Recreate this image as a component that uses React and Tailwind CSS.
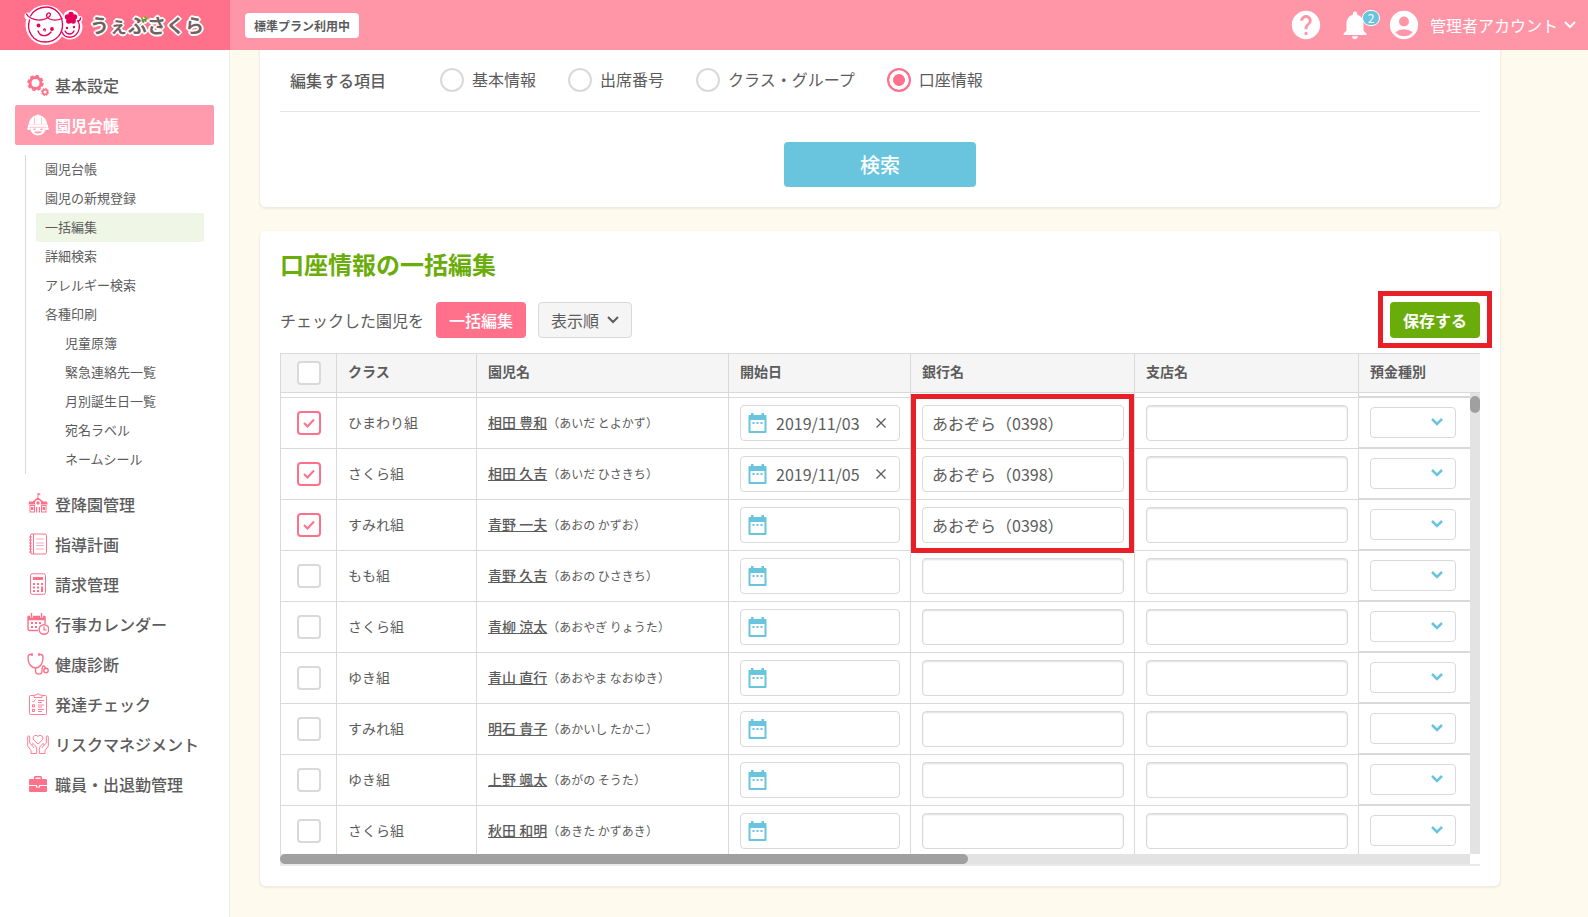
import { MdAccountCircle, MdHelp, MdNotifications } from "react-icons/md";

const FONT = "font-['Noto_Sans_CJK_JP','Noto_Sans',sans-serif]";

const SettingsIcon = () => (
  <svg viewBox="0 0 22 22" className="h-[22px] w-[22px]" fill="none" stroke="#ff708b">
    <circle cx="8.5" cy="9" r="5.500" strokeWidth="3" />
    <circle cx="8.5" cy="9" r="7.400" strokeWidth="1.600" strokeDasharray="3.400 2.410" />
    <circle cx="18" cy="18" r="2.4" strokeWidth="1.6" />
    <circle cx="18" cy="18" r="3.6" strokeWidth="1" strokeDasharray="1.6 1.2" />
  </svg>
);

const ChildIcon = () => (
  <svg viewBox="0 0 22 22" className="h-[22px] w-[22px]" fill="white">
    <path d="M2 10.5C2 5 6 1.6 10 1.2V.4h2v.8c4 .4 8 3.800 8 9.300z" />
    <path d="M1 10.500h20v2.500H1z" />
    <path
      fillRule="evenodd"
      d="M3 12.500h16c0 5.500-3.500 9-8 9s-8-3.500-8-9zm3.500 2v1.500h2v-1.500zm7 0v1.500h2v-1.500zM7 17.500c1 2.500 7 2.500 8 0z"
    />
    <circle cx="1.800" cy="14.500" r="1.600" />
    <circle cx="20.200" cy="14.500" r="1.600" />
    <path d="M7.500 3.500v6.500M14.500 3.500v6.500M3 13.300h16" stroke="#ff9bad" strokeWidth=".6" />
  </svg>
);

const SchoolIcon = () => (
  <svg viewBox="0 0 22 22" className="h-[22px] w-[22px]" fill="#ff708b">
    <path d="M10.500 0h.8l2.700 1.300-2.700 1.200V4.500l5 4H20l.6 3H1.500l.6-3h3.600l4.800-4z" />
    <circle cx="11" cy="10" r="3" fill="white" />
    <circle cx="11" cy="10" r="1.700" />
    <path
      fillRule="evenodd"
      d="M2.500 12h5.500v7.500H2.500zm1 1v5.500H7V13zm10.500-1h5.500v7.500H14zm1 1v5.500h3.500V13z"
    />
    <path d="M4 14h2.500v3H4zM15.500 14H18v3h-2.500zM9 14h1.200v5.500H9zM11.800 14H13v5.500h-1.200z" />
  </svg>
);

const NotebookIcon = () => (
  <svg viewBox="0 0 22 22" className="h-[22px] w-[22px]" fill="none" stroke="#ff708b">
    <rect x="3.500" y="1" width="16" height="20" rx="1.500" />
    <path d="M6.500 1v20" />
    <path d="M2 4h3M2 7h3M2 10h3M2 13h3M2 16h3M2 19h3" strokeWidth="1.200" />
    <path d="M9 6h8M9 10h8M9 12.500h8M9 16h8" strokeWidth=".6" />
  </svg>
);

const CalculatorIcon = () => (
  <svg viewBox="0 0 22 22" className="h-[22px] w-[22px]" fill="none" stroke="#ff708b">
    <rect x="3.500" y=".800" width="15" height="20.500" rx="2" />
    <path d="M6 5.500h10" strokeWidth="3" />
    <path d="M6 11h2M10 11h2M6 14.500h2M10 14.500h2M6 18h2M10 18h2M14 11h2" strokeWidth="1.800" />
    <path d="M15 13.500V19" strokeWidth="2" />
  </svg>
);

const EventIcon = () => (
  <svg viewBox="0 0 22 22" className="h-[22px] w-[22px]" fill="none" stroke="#ff708b">
    <path d="M11 17.500H2.500a1.500 1.500 0 0 1-1.500-1.500V4h17v7" strokeWidth="1.400" />
    <path d="M1 5h17" strokeWidth="4.500" />
    <path d="M4.500 0v4.500M14.500 0v4.500" stroke="white" strokeWidth="3" />
    <path d="M4.500 0v4.500M14.500 0v4.500" strokeWidth="1.400" />
    <path d="M4 10h2M8 10h2M12 10h2M4 14h2M8 14h2" strokeWidth="2.200" />
    <circle cx="17" cy="16.500" r="4.800" fill="white" strokeWidth="1.400" />
    <path d="M17 13.500v3.300h2.500" strokeWidth="1.200" />
  </svg>
);

const StethoscopeIcon = () => (
  <svg viewBox="0 0 22 22" className="h-[22px] w-[22px]" fill="none" stroke="#ff708b" strokeWidth="1.400">
    <path d="M5.500 1.500H3C1.500 1.500 1 3 1 5c0 6 3.500 10 7.500 10S16 11 16 5c0-2-.5-3.500-2-3.500h-2.500" />
    <path d="M5 .300v2.500M12 .300v2.500" strokeWidth="1.800" />
    <path d="M8.500 15v2.500c0 5 6.500 4.500 6.500.5 0-2.500 0-5 1.500-5s1.500 1 2 2.500" />
    <circle cx="19" cy="17.500" r="2.200" />
  </svg>
);

const ChecklistIcon = () => (
  <svg viewBox="0 0 22 22" className="h-[22px] w-[22px]" fill="none" stroke="#ff708b" strokeWidth=".900">
    <rect x="2.500" y="2.500" width="17" height="19" rx="1" />
    <path d="M7 4.500V2h2.500c.5-1.800 2.500-1.800 3 0H15v2.500z" fill="white" />
    <path d="M5.500 8l1 1 2-2.500M11 7.500h6M11 9.500h4" />
    <rect x="5.500" y="11.800" width="2" height="2" />
    <rect x="5.500" y="16.500" width="2" height="2" />
    <path d="M11 12h6M11 14h4M11 16.500h6M11 18.500h4" />
  </svg>
);

const CareIcon = () => (
  <svg viewBox="0 0 22 22" className="h-[22px] w-[22px]" fill="none" stroke="#ff708b" strokeWidth=".900">
    <path d="M11 11L6.800 7C4.500 4 8.500.500 11 3.500 13.500.500 17.500 4 15.200 7z" />
    <path d="M4 20.500v-3L.700 13V4c0-1.500 2-1.500 2 0v6l2 2 1-1.500c2.500 1.500 4 4 4 6v4z" />
    <path d="M18 20.500v-3l3.300-4.500V4c0-1.500-2-1.500-2 0v6l-2 2-1-1.500c-2.500 1.500-4 4-4 6v4z" />
    <path d="M4.700 12l2.500 3M17.300 12l-2.500 3" />
  </svg>
);

const BriefcaseIcon = () => (
  <svg viewBox="0 0 22 22" className="h-[22px] w-[22px]" fill="#ff708b">
    <path fillRule="evenodd" d="M7 6V4.500C7 3.500 7.500 3 8.500 3h5c1 0 1.500.5 1.500 1.500V6h3.500c1 0 1.500.5 1.500 1.500V12H2V7.500C2 6.500 2.500 6 3.500 6zm1.500 0h5V4.500h-5z" />
    <path d="M2 13h7v1.500h4V13h7v4.500c0 1-.5 1.500-1.500 1.500h-15C2.500 19 2 18.500 2 17.500z" />
    <path d="M10 12h2v1.500h-2z" />
  </svg>
);

const CalendarIcon = () => (
  <svg viewBox="0 0 19 20" className="h-5 w-[19px] shrink-0" fill="none">
    <path d="M1.500 3h16v16h-16z" stroke="#69c4de" strokeWidth="2" strokeLinejoin="round" />
    <path d="M1 2h17v5H1zM3 0h2.500v3H3zM13.500 0H16v3h-2.500z" fill="#69c4de" />
    <path d="M4.500 10h2M8.500 10h2M12.500 10h2" stroke="#69c4de" strokeWidth="2" />
  </svg>
);

const Chevron = ({ className }) => (
  <svg viewBox="0 0 12 8" className={className} fill="none" stroke="currentColor" strokeWidth="2">
    <path d="M1 1l5 5 5-5" />
  </svg>
);

const Logo = () => (
  <a href="#" aria-label="うぇぶさくら" className="flex h-full w-[230px] shrink-0 items-center bg-[#ff708b] pl-6">
    <svg viewBox="24 0 60 50" className="h-[50px] w-[60px] shrink-0" fill="none">
      <g fill="white">
        <circle cx="45.500" cy="25" r="20" />
        <circle cx="70" cy="27" r="12.500" />
        <circle cx="71" cy="18" r="8" />
        <circle cx="28" cy="16" r="3.500" />
        <circle cx="79.500" cy="19" r="3" />
      </g>
      <g stroke="#e5005a" strokeWidth="1.300" strokeLinecap="round">
        <path d="M29.500 20C26 31 33 42 45 42s18-9 17.500-18C62 14 55 7 46 7c-7 0-13 4-15.500 9" />
        <path d="M26.500 14c3 5 12 8 20 4.500 6-3 4-7 1-5-4 4 5 9 14.500 5" />
        <path d="M62 32c3 7 12 7 16 0 2-4 2-7 0-11" />
        <path d="M77.500 21c2 0 3-1 3-3" />
        <path d="M38 31c2 6 9 6 13 1M65 31c2 4 7 4 9 0M43.500 30c1-2 2.500-1 1.500 1" />
      </g>
      <g fill="#e5005a">
        <circle cx="38.500" cy="25.500" r="1.900" />
        <circle cx="52" cy="29" r="1.900" />
        <circle cx="67" cy="28" r="1.200" />
        <circle cx="74" cy="27" r="1.200" />
        <circle cx="71" cy="14.500" r="2.700" />
        <circle cx="74.500" cy="17" r="2.700" />
        <circle cx="73.200" cy="21" r="2.700" />
        <circle cx="68.800" cy="21" r="2.700" />
        <circle cx="67.500" cy="17" r="2.700" />
        <circle cx="71" cy="18" r="3" />
      </g>
    </svg>
    <span className="relative ml-1.5 text-[19px] leading-7 font-bold text-[#6f625f] [text-shadow:2px_0_white,-2px_0_white,0_2px_white,0_-2px_white,1px_1px_white,-1px_1px_white,1px_-1px_white,-1px_-1px_white]">
      うぇぶさくら
      <svg viewBox="0 0 8 8" className="absolute top-1 left-[50px] h-2 w-2" stroke="#6aad0a" strokeWidth="2" strokeLinecap="round">
        <path d="M2 3.500l1.500 2M5 2l1.500 2" />
      </svg>
    </span>
  </a>
);

const subMenu = [
  { label: "園児台帳" },
  { label: "園児の新規登録" },
  { label: "一括編集", active: true },
  { label: "詳細検索" },
  { label: "アレルギー検索" },
  { label: "各種印刷" },
  { label: "児童原簿", nested: true },
  { label: "緊急連絡先一覧", nested: true },
  { label: "月別誕生日一覧", nested: true },
  { label: "宛名ラベル", nested: true },
  { label: "ネームシール", nested: true },
];

const menu = [
  { label: "基本設定", icon: SettingsIcon },
  { label: "園児台帳", icon: ChildIcon, active: true, children: subMenu },
  { label: "登降園管理", icon: SchoolIcon },
  { label: "指導計画", icon: NotebookIcon },
  { label: "請求管理", icon: CalculatorIcon },
  { label: "行事カレンダー", icon: EventIcon },
  { label: "健康診断", icon: StethoscopeIcon },
  { label: "発達チェック", icon: ChecklistIcon },
  { label: "リスクマネジメント", icon: CareIcon },
  { label: "職員・出退勤管理", icon: BriefcaseIcon },
];

const items = ["基本情報", "出席番号", "クラス・グループ", "口座情報"];

const rows = [
  { group: "ひまわり組", name: "相田 豊和", kana: "あいだ とよかず", date: "2019/11/03", bank: "あおぞら（0398）", checked: true },
  { group: "さくら組", name: "相田 久吉", kana: "あいだ ひさきち", date: "2019/11/05", bank: "あおぞら（0398）", checked: true },
  { group: "すみれ組", name: "青野 一夫", kana: "あおの かずお", bank: "あおぞら（0398）", checked: true },
  { group: "もも組", name: "青野 久吉", kana: "あおの ひさきち" },
  { group: "さくら組", name: "青柳 涼太", kana: "あおやぎ りょうた" },
  { group: "ゆき組", name: "青山 直行", kana: "あおやま なおゆき" },
  { group: "すみれ組", name: "明石 貴子", kana: "あかいし たかこ" },
  { group: "ゆき組", name: "上野 颯太", kana: "あがの そうた" },
  { group: "さくら組", name: "秋田 和明", kana: "あきた かずあき" },
];

const Header = () => (
  <header className="relative z-20 flex h-[50px] items-center bg-[#ff96a8] pr-3 text-white">
    <Logo />
    <span className="ml-[15px] rounded bg-white px-[9px] pt-px text-xs leading-6 font-bold text-[#5c5c5c]">標準プラン利用中</span>
    <div className="ml-auto flex items-center gap-[15px]">
      <button type="button" aria-label="ヘルプ">
        <MdHelp size={34} />
      </button>
      <button type="button" aria-label="お知らせ" className="relative">
        <MdNotifications size={34} />
        <span className="absolute top-0.5 -right-2 flex h-4 w-[18px] items-center justify-center rounded-full border border-white bg-[#69c4de] text-xs leading-3">
          2
        </span>
      </button>
      <button type="button" className="flex items-center">
        <MdAccountCircle size={34} />
        <span className="ml-[9px] text-base">管理者アカウント</span>
        <Chevron className="ml-1.5 h-2 w-3" />
      </button>
    </div>
  </header>
);

const Sidebar = () => (
  <nav className="w-[230px] shrink-0 border-r border-[#ececec] bg-white px-[15px] pt-[15px]">
    {menu.map(({ label, icon: Icon, active, children }) => (
      <div key={label}>
        <a
          href="#"
          className={`flex h-10 items-center gap-1.5 rounded-xs pl-3 ${active ? "bg-[#ff9bad] font-bold text-white" : "font-medium"}`}
        >
          <Icon />
          {label}
        </a>
        {children && (
          <ul className="m-2.5 border-l border-[#d9d9d9] pl-2.5">
            {children.map((c) => (
              <li key={c.label}>
                <a
                  href="#"
                  className={`block rounded-xs pb-0.5 text-[13px] leading-[27px] ${c.nested ? "pl-[29px]" : "pl-[9px]"} ${c.active ? "bg-[#f0f6e6]" : ""}`}
                >
                  {c.label}
                </a>
              </li>
            ))}
          </ul>
        )}
      </div>
    ))}
  </nav>
);

const Checkbox = ({ label, checked }) => (
  <span className="relative mx-auto block h-6 w-6">
    <input
      type="checkbox"
      aria-label={label}
      defaultChecked={checked}
      className="peer block h-6 w-6 appearance-none rounded border-2 border-[#d9d9d9] bg-white checked:border-[#ff708b]"
    />
    <svg
      viewBox="0 0 12 10"
      className="pointer-events-none absolute top-[7px] left-1.5 hidden h-2.5 w-3 peer-checked:block"
      fill="none"
      stroke="#ff708b"
      strokeWidth="2"
    >
      <path d="M1 5l3.500 3.500L11 1.500" />
    </svg>
  </span>
);

const SearchCard = () => (
  <section className="rounded-b-md bg-white px-5 pb-5 shadow-[0_1px_2px_1px_#efebe0]">
    <fieldset className="flex h-[62px] items-center border-b border-[#e5e5e5] px-2.5 pb-0.5">
      <legend className="float-left w-[150px] font-medium">編集する項目</legend>
      <div className="flex gap-8">
        {items.map((item) => (
          <label key={item} className="flex items-center gap-2">
            <input
              type="radio"
              name="item"
              defaultChecked={item === "口座情報"}
              className="h-6 w-6 appearance-none rounded-full border-2 border-[#d9d9d9] bg-white checked:border-[#ff708b] checked:bg-[#ff708b] checked:shadow-[inset_0_0_0_4px_white]"
            />
            <span className="pb-0.5">{item}</span>
          </label>
        ))}
      </div>
    </fieldset>
    <button type="button" className="mx-auto mt-[30px] block h-[45px] w-48 rounded bg-[#69c4de] text-xl font-medium text-white">
      検索
    </button>
  </section>
);

const th = "border-y border-l border-[#d9d9d9] px-[11px] text-left text-sm font-bold";
const td = "border-b border-l border-[#d9d9d9] px-[11px]";
const inputCell = "border-b border-l border-[#d9d9d9] px-2.5 pl-[11px]";
const field = "block h-9 w-full rounded border border-[#d9d9d9] bg-white px-[9px]";

const AccountTable = () => (
  <div>
    <div className="relative h-[501px] overflow-hidden">
      <table className="w-[1600px] table-fixed border-separate border-spacing-0">
        <thead>
          <tr className="h-10 bg-[#f5f5f5]">
            <th className={`${th} w-14`}>
              <Checkbox label="すべて選択" />
            </th>
            <th className={`${th} w-[140px] pb-1`}>クラス</th>
            <th className={`${th} w-[252px] pb-1`}>園児名</th>
            <th className={`${th} w-[182px] pb-1`}>開始日</th>
            <th className={`${th} w-56 pb-1`}>銀行名</th>
            <th className={`${th} w-56 pb-1`}>支店名</th>
            <th className={`${th} pb-1`}>預金種別</th>
          </tr>
        </thead>
        <tbody>
          <tr className="h-[5px]" aria-hidden="true">
            <td className={td} />
            <td className={td} />
            <td className={td} />
            <td className={td} />
            <td className={td} />
            <td className={td} />
            <td className={`${td} border-b-2`} />
          </tr>
          {rows.map((row, i) => (
            <tr key={row.name} className="h-[51px]">
              <td className={td}>
                <Checkbox label={row.name} checked={row.checked} />
              </td>
              <td className={`${td} pb-0.5 text-sm`}>{row.group}</td>
              <td className={`${td} pb-0.5 text-sm`}>
                <a href="#" className="font-medium underline">
                  {row.name}
                </a>
                <span className="text-xs">（{row.kana}）</span>
              </td>
              <td className={inputCell}>
                <div className="flex h-9 items-center rounded border border-[#d9d9d9] pl-[7px]">
                  <CalendarIcon />
                  <input
                    type="text"
                    aria-label={`${row.name} 開始日`}
                    defaultValue={row.date}
                    className="ml-[9px] w-[94px] outline-none"
                  />
                  {row.date && (
                    <button type="button" aria-label="クリア" className="ml-1.5">
                      <svg viewBox="0 0 10 10" className="h-2.5 w-2.5" stroke="currentColor" strokeWidth="1.300">
                        <path d="M.5.500l9 9M9.500.500l-9 9" />
                      </svg>
                    </button>
                  )}
                </div>
              </td>
              <td className={`${inputCell} relative`}>
                <input
                  type="text"
                  aria-label={`${row.name} 銀行名`}
                  defaultValue={row.bank}
                  className={`${field} ${row.bank ? "" : "shadow-[inset_0_1px_2px_#ddd]"}`}
                />
                {i === 0 && (
                  <div className="pointer-events-none absolute -top-1 right-0 left-0 z-10 h-[159px] border-5 border-[#e81f26]" />
                )}
              </td>
              <td className={inputCell}>
                <input
                  type="text"
                  aria-label={`${row.name} 支店名`}
                  className={`${field} shadow-[inset_0_1px_2px_#ddd]`}
                />
              </td>
              <td className={`${td} border-b-2`}>
                <div className="relative w-[86px]">
                  <select
                    aria-label={`${row.name} 預金種別`}
                    className="block h-[31px] w-full appearance-none rounded border border-[#d9d9d9] bg-white"
                  >
                    <option></option>
                  </select>
                  <Chevron className="pointer-events-none absolute top-[11px] right-[13px] h-2 w-3 stroke-[2.500] text-[#69c4de]" />
                </div>
              </td>
            </tr>
          ))}
        </tbody>
      </table>
      <div className="absolute top-10 right-0 bottom-0 w-2.5 bg-[#e3e3e3] pt-[3px]">
        <div className="h-[17px] rounded-full bg-[#a0a0a0]" />
      </div>
    </div>
    <div className="border-b-2 border-[#e9e9e9] pr-2.5">
      <div className="h-2.5 bg-[#e3e3e3]">
        <div className="h-2.5 w-[57.8%] rounded-full bg-[#a0a0a0]" />
      </div>
    </div>
  </div>
);

const EditCard = () => (
  <section className="mt-6 rounded-md bg-white p-5 pt-[15px] shadow-[0_1px_2px_1px_#efebe0]">
    <h2 className="text-2xl leading-9 font-bold text-[#6aad0a]">口座情報の一括編集</h2>
    <div className="mt-5 mb-[15px] flex items-center gap-3">
      <span>チェックした園児を</span>
      <button type="button" className="h-9 w-[90px] rounded bg-[#ff708b] font-medium text-white">
        一括編集
      </button>
      <button type="button" className="flex h-9 items-center gap-2 rounded border border-[#d9d9d9] bg-[#f5f5f5] px-3">
        表示順
        <Chevron className="h-2 w-3" />
      </button>
      <div className="relative ml-auto">
        <button type="button" className="block h-9 w-[90px] rounded bg-[#6aad0a] font-bold text-white">
          保存する
        </button>
        <div className="pointer-events-none absolute -inset-x-3 -top-[11px] -bottom-2.5 border-5 border-[#e81f26]" />
      </div>
    </div>
    <AccountTable />
  </section>
);

const App = () => {
  return (
    <div className={`flex min-h-screen flex-col bg-[#fffaee] text-base text-[#5c5c5c] ${FONT}`}>
      <Header />
      <div className="flex flex-1">
        <Sidebar />
        <main className="min-w-0 flex-1 px-[30px] pb-[31px]">
          <div className="max-w-[1240px]">
            <SearchCard />
            <EditCard />
          </div>
        </main>
      </div>
    </div>
  );
};

export default App;
